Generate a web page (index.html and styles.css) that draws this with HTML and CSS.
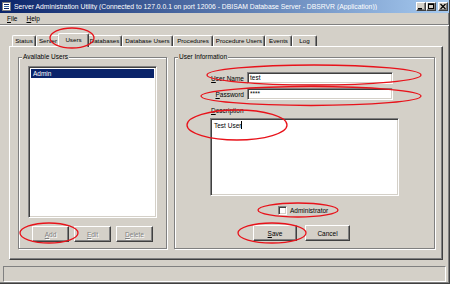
FILE: index.html
```html
<!DOCTYPE html>
<html lang="en">
<head>
   <meta charset="UTF-8">
   <title>Server Administration Utility</title>
   <link rel="stylesheet" href="styles.css">
</head>
<body>
   <div class="window">
       <div class="titlebar">
           <svg class="app-icon" viewBox="0 0 9 9">
               <rect x="0.5" y="0.5" width="8" height="8" fill="#fff" stroke="#808080"/>
               <rect x="2" y="2" width="5" height="1" fill="#0a246a"/>
               <rect x="2" y="4" width="5" height="1" fill="#3a6ea5"/>
               <rect x="2" y="6" width="5" height="1" fill="#0a246a"/>
           </svg>
           <span class="title">Server Administration Utility (Connected to 127.0.0.1 on port 12006 - DBISAM Database Server - DBSRVR (Application))</span>
           <div class="caption-buttons">
               <span class="cap-btn"><svg viewBox="0 0 8 7"><rect x="1" y="5" width="4" height="1.5" fill="#000"/></svg></span>
               <span class="cap-btn"><svg viewBox="0 0 8 7"><rect x="1.5" y="1" width="5" height="4.5" fill="none" stroke="#000"/><rect x="1" y="0.5" width="6" height="1.5" fill="#000"/></svg></span>
               <span class="cap-btn close"><svg viewBox="0 0 8 7"><path d="M1.5 1 L6.5 6 M6.5 1 L1.5 6" stroke="#000" stroke-width="1.2"/></svg></span>
           </div>
       </div>
       <div class="menubar">
           <span><u>F</u>ile</span>
           <span><u>H</u>elp</span>
       </div>
       <div class="separator"></div>
       <div class="client">
           <div class="tabstrip">
               <div class="tab" style="width:24px">Status</div>
               <div class="tab" style="width:24px">Server</div>
               <div class="tab active" style="width:31px">Users</div>
               <div class="tab" style="width:35px">Databases</div>
               <div class="tab" style="width:51px">Database Users</div>
               <div class="tab" style="width:40px">Procedures</div>
               <div class="tab" style="width:52px">Procedure Users</div>
               <div class="tab" style="width:27px">Events</div>
               <div class="tab" style="width:25px">Log</div>
           </div>
           <div class="page">
               <div class="group group-users">
                   <span class="legend">Available Users</span>
                   <div class="listbox">
                       <div class="list-item selected">Admin</div>
                   </div>
                   <div class="btn-row users-buttons">
                       <button class="btn" disabled><u>A</u>dd</button>
                       <button class="btn" disabled><u>E</u>dit</button>
                       <button class="btn" disabled><u>D</u>elete</button>
                   </div>
               </div>
               <div class="group group-info">
                   <span class="legend">User Information</span>
                   <div class="fields">
                       <label class="field-label"><u>U</u>ser Name</label>
                       <div class="edit">test</div>
                       <label class="field-label"><u>P</u>assword</label>
                       <div class="edit">****</div>
                   </div>
                   <label class="desc-label"><u>D</u>escription</label>
                   <div class="memo">Test User<span class="caret"></span></div>
                   <div class="check-row">
                       <span class="checkbox"></span>
                       <span>Administrator</span>
                   </div>
                   <div class="btn-row info-buttons">
                       <button class="btn save"><u>S</u>ave</button>
                       <button class="btn cancel">Cancel</button>
                   </div>
               </div>
           </div>
       </div>
       <div class="statusbar"></div>

       <svg class="marks" viewBox="0 0 450 284">
           <ellipse cx="72" cy="38" rx="22" ry="10"/>
           <ellipse cx="314" cy="75" rx="107" ry="10"/>
           <ellipse cx="311" cy="96" rx="110" ry="9.5"/>
           <ellipse cx="237" cy="125" rx="50" ry="15"/>
           <ellipse cx="298" cy="210" rx="40" ry="7"/>
           <ellipse cx="272" cy="233" rx="34" ry="10"/>
           <ellipse cx="49" cy="233" rx="29" ry="10"/>
       </svg>
   </div>
</body>
</html>
```

FILE: styles.css
```css
* {
    box-sizing: border-box;
}
body {
    margin: 0;
    background-color: #d4d0c8;
    font-family: "Liberation Sans", Arial, sans-serif;
    font-size: 6.5px;
    color: #000;
}
.window {
    position: relative;
    width: 450px;
    height: 284px;
    background-color: #d4d0c8;
    border-right: 1px solid #404040;
    border-bottom: 1px solid #404040;
    box-shadow: inset -1px -1px 0 #808080;
    display: flex;
    flex-direction: column;
    overflow: hidden;
}
.titlebar {
    height: 13px;
    flex: none;
    background: linear-gradient(to right, #0a246a, #a6caf0);
    display: flex;
    align-items: center;
    padding: 0 1px 0 2px;
    color: #fff;
}
.app-icon {
    width: 9px;
    height: 9px;
    margin-right: 3px;
    flex: none;
}
.title {
    flex: 1;
    font-size: 6.8px;
    white-space: nowrap;
    overflow: hidden;
}
.caption-buttons {
    display: flex;
}
.cap-btn {
    width: 10px;
    height: 9px;
    background-color: #d4d0c8;
    border: 1px solid;
    border-color: #fff #404040 #404040 #fff;
    box-shadow: inset -1px -1px 0 #808080;
    display: flex;
}
.cap-btn svg {
    width: 8px;
    height: 7px;
}
.cap-btn.close {
    margin-left: 2px;
}
.menubar {
    height: 11px;
    flex: none;
    display: flex;
    align-items: center;
    padding-left: 7px;
    gap: 9px;
}
.separator {
    height: 2px;
    flex: none;
    border-top: 1px solid #808080;
    border-bottom: 1px solid #fff;
}
.client {
    padding: 7px 0 0 9px;
    flex: none;
}
.tabstrip {
    display: flex;
    align-items: flex-end;
    height: 13px;
    padding-left: 3px;
}
.tab {
    position: relative;
    height: 11px;
    background-color: #d4d0c8;
    border-top: 1px solid #fff;
    border-left: 1px solid #fff;
    border-right: 1px solid #404040;
    border-radius: 2px 2px 0 0;
    box-shadow: inset -1px 0 0 #808080;
    text-align: center;
    font-size: 6.2px;
    line-height: 10px;
    white-space: nowrap;
    overflow: hidden;
}
.tab.active {
    height: 14px;
    margin: 0 -2px -1px;
    z-index: 2;
    line-height: 11px;
}
.page {
    position: relative;
    z-index: 1;
    width: 434px;
    height: 214px;
    border: 1px solid;
    border-color: #fff #404040 #404040 #fff;
    box-shadow: inset -1px -1px 0 #808080;
    padding: 10px 0 0 8px;
    display: flex;
    gap: 7px;
}
.group {
    height: 192px;
    border: 1px solid #808080;
    box-shadow: inset 1px 1px 0 #fff, 1px 1px 0 #fff;
    display: flex;
    flex-direction: column;
}
.group-users {
    width: 149px;
}
.group-info {
    width: 261px;
}
.legend {
    align-self: flex-start;
    height: 8px;
    line-height: 8px;
    margin: -5px 0 -3px 3px;
    padding: 0 1px;
    background-color: #d4d0c8;
}
.listbox {
    width: 129px;
    height: 152px;
    margin: 8px 0 0 9px;
    background-color: #fff;
    border: 1px solid;
    border-color: #808080 #fff #fff #808080;
    box-shadow: inset 1px 1px 0 #404040, inset -1px -1px 0 #d4d0c8;
    padding: 2px;
}
.list-item {
    height: 9px;
    line-height: 9px;
    padding-left: 2px;
}
.list-item.selected {
    background-color: #0a246a;
    color: #fff;
}
.btn-row {
    display: flex;
}
.users-buttons {
    margin: 8px 0 0 13px;
    gap: 5px;
}
.btn {
    width: 37px;
    height: 16px;
    padding: 0;
    font: inherit;
    color: #000;
    background-color: #d4d0c8;
    border: 1px solid;
    border-color: #fff #404040 #404040 #fff;
    box-shadow: inset -1px -1px 0 #808080;
}
.btn:disabled {
    color: #808080;
    text-shadow: 1px 1px 0 #fff;
}
.fields {
    display: grid;
    grid-template-columns: 69px 146px;
    grid-auto-rows: 12px;
    column-gap: 3px;
    row-gap: 4px;
    margin-top: 14px;
}
.field-label {
    text-align: right;
    align-self: center;
}
.edit {
    background-color: #fff;
    border: 1px solid;
    border-color: #808080 #fff #fff #808080;
    box-shadow: inset 1px 1px 0 #404040, inset -1px -1px 0 #d4d0c8;
    padding-left: 2px;
    line-height: 10px;
}
.desc-label {
    height: 10px;
    line-height: 10px;
    margin: 6px 0 0 36px;
}
.memo {
    width: 189px;
    height: 78px;
    margin: 2px 0 0 35px;
    background-color: #fff;
    border: 1px solid;
    border-color: #808080 #fff #fff #808080;
    box-shadow: inset 1px 1px 0 #404040, inset -1px -1px 0 #d4d0c8;
    padding: 2px 3px;
    line-height: 9px;
}
.caret {
    display: inline-block;
    width: 1px;
    height: 8px;
    background-color: #000;
    vertical-align: -1px;
}
.check-row {
    display: flex;
    align-items: center;
    gap: 3px;
    margin: 10px 0 0 103px;
    height: 9px;
}
.checkbox {
    width: 9px;
    height: 9px;
    background-color: #fff;
    border: 1px solid;
    border-color: #808080 #fff #fff #808080;
    box-shadow: inset 1px 1px 0 #404040, inset -1px -1px 0 #d4d0c8;
}
.info-buttons {
    margin: 10px 0 0 78px;
    gap: 8px;
}
.btn.save {
    width: 44px;
}
.btn.cancel {
    width: 45px;
}
.statusbar {
    height: 16px;
    flex: none;
    margin: 6px 3px 0 3px;
    border: 1px solid;
    border-color: #808080 #fff #fff #808080;
}
.marks {
    position: absolute;
    left: 0;
    top: 0;
    width: 450px;
    height: 284px;
    pointer-events: none;
    z-index: 5;
}
.marks ellipse {
    fill: none;
    stroke: #e8121a;
    stroke-width: 1.3;
}
```
